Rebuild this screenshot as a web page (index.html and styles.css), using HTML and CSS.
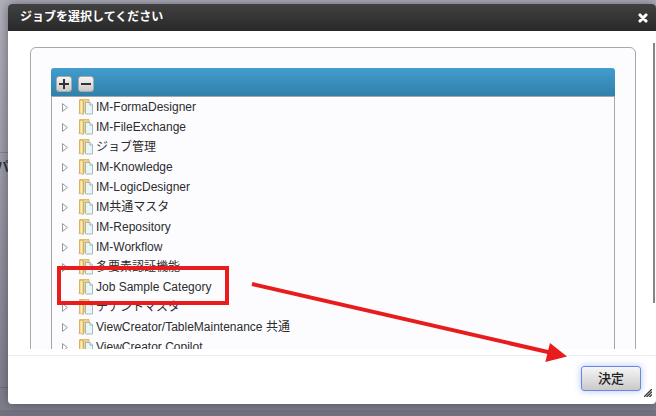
FILE: index.html
```html
<!DOCTYPE html>
<html lang="ja">
<head>
<meta charset="utf-8">
<title>ジョブを選択してください</title>
<link rel="stylesheet" href="styles.css">
</head>
<body>
<svg class="defs" width="0" height="0">
  <defs>
    <linearGradient id="gold" x1="0" x2="1" y1="0" y2="0">
      <stop offset="0" stop-color="#edc76e"/><stop offset=".5" stop-color="#fff0bd"/><stop offset="1" stop-color="#e3ba60"/>
    </linearGradient>
    <symbol id="folder" viewBox="0 0 16 16">
      <path d="M0 15L2 12.500V15z" fill="#c9c9cf"/>
      <path d="M2 .5H11V13H2z" fill="#f1d184" stroke="#d9b15c" stroke-width=".8"/>
      <path d="M1.500 .8L5.500 2V15.500L1.500 14z" fill="url(#gold)" stroke="#d0a550" stroke-width=".7"/>
      <path d="M7.500 3.500H12L14.500 6V15H7.500z" fill="#e9f5f6" stroke="#93adb1" stroke-width=".8"/>
      <path d="M12 3.500V6H14.500" fill="#fff" stroke="#7f9da3" stroke-width=".8"/>
    </symbol>
    <symbol id="caret" viewBox="0 0 6 9">
      <path d="M.5 .6L5.300 4.500L.5 8.400z" fill="#fff" stroke="#8d8d8d" stroke-width=".9"/>
    </symbol>
  </defs>
</svg>
<div class="backdrop">
  <div class="back-top"></div>
  <div class="back-mid"><span class="back-text">パ</span></div>
  <div class="back-low"></div>
  <div class="back-end"></div>
</div>
<section class="dialog">
  <header class="title-bar">
    <span>ジョブを選択してください</span>
    <svg class="close" width="10" height="10" viewBox="0 0 10 10"><path d="M2 2L8 8M8 2L2 8" stroke="#fff" stroke-width="3.100" stroke-linecap="round"/></svg>
  </header>
  <main class="content">
    <div class="panel">
      <div class="toolbar">
        <span class="tool"><svg width="10" height="10"><path d="M0 5H10M5 0V10" stroke="#333" stroke-width="2"/></svg></span>
        <span class="tool"><svg width="10" height="10"><path d="M0 5H10" stroke="#333" stroke-width="2"/></svg></span>
      </div>
      <ul class="tree">
        <li><svg class="caret"><use href="#caret"/></svg><svg class="folder"><use href="#folder"/></svg>IM-FormaDesigner</li>
        <li><svg class="caret"><use href="#caret"/></svg><svg class="folder"><use href="#folder"/></svg>IM-FileExchange</li>
        <li><svg class="caret"><use href="#caret"/></svg><svg class="folder"><use href="#folder"/></svg>ジョブ管理</li>
        <li><svg class="caret"><use href="#caret"/></svg><svg class="folder"><use href="#folder"/></svg>IM-Knowledge</li>
        <li><svg class="caret"><use href="#caret"/></svg><svg class="folder"><use href="#folder"/></svg>IM-LogicDesigner</li>
        <li><svg class="caret"><use href="#caret"/></svg><svg class="folder"><use href="#folder"/></svg>IM共通マスタ</li>
        <li><svg class="caret"><use href="#caret"/></svg><svg class="folder"><use href="#folder"/></svg>IM-Repository</li>
        <li><svg class="caret"><use href="#caret"/></svg><svg class="folder"><use href="#folder"/></svg>IM-Workflow</li>
        <li><svg class="caret"><use href="#caret"/></svg><svg class="folder"><use href="#folder"/></svg>多要素認証機能</li>
        <li><svg class="caret"></svg><svg class="folder"><use href="#folder"/></svg>Job Sample Category</li>
        <li><svg class="caret"><use href="#caret"/></svg><svg class="folder"><use href="#folder"/></svg>テナントマスタ</li>
        <li><svg class="caret"><use href="#caret"/></svg><svg class="folder"><use href="#folder"/></svg>ViewCreator/TableMaintenance 共通</li>
        <li><svg class="caret"><use href="#caret"/></svg><svg class="folder"><use href="#folder"/></svg>ViewCreator Copilot</li>
      </ul>
    </div>
    <div class="scroll-thumb"></div>
  </main>
  <footer class="footer">
    <button class="decide">決定</button>
    <svg class="grip" width="8" height="8"><path d="M0 8L8 0M2.700 8L8 2.700M5.400 8L8 5.400" stroke="#333" stroke-width="1.300"/></svg>
  </footer>
</section>
<svg class="annotation" width="656" height="416" viewBox="0 0 656 416">
  <rect x="59" y="268" width="168" height="35" fill="none" stroke="#e81c1c" stroke-width="4"/>
  <path d="M252 284L550 352.500" stroke="#e81c1c" stroke-width="4"/>
  <path d="M550 343L567 356.500L545.300 362z" fill="#e81c1c"/>
</svg>
</body>
</html>
```
FILE: styles.css
```css
* { box-sizing: border-box; }

body {
  margin: 0;
  width: 656px;
  height: 416px;
  overflow: hidden;
  position: relative;
  font-family: "Liberation Sans", "Noto Sans CJK JP", sans-serif;
  font-size: 12px;
  color: #2c2c2c;
}

.defs { position: absolute; }

.backdrop {
  position: absolute;
  inset: 0;
  display: flex;
  flex-direction: column;
  background: linear-gradient(#b2b2bc, #a0a0ab 36%, #858592 85%, #7d7d8a);
}
.back-top { height: 153px; border-bottom: 1px solid #85858f; }
.back-mid { height: 235px; border-bottom: 1px solid #70707d; overflow: hidden; }
.back-text { display: block; margin: 4px 0 0 -4px; font-size: 13px; font-weight: bold; line-height: 20px; }
.back-low { flex: 1; }
.back-end { height: 6px; background: #737380; }

.dialog {
  position: absolute;
  left: 8px;
  top: 4px;
  width: 648px;
  height: 400px;
  display: flex;
  flex-direction: column;
  overflow: hidden;
  background: #fff;
  border-radius: 4px;
  box-shadow: 0 0 12px rgba(45, 45, 65, .6);
}

.title-bar {
  height: 27px;
  flex: none;
  display: flex;
  align-items: center;
  justify-content: space-between;
  padding: 0 8px 2px 12px;
  background: linear-gradient(#414141, #292929);
  color: #fff;
  font-size: 12px;
  font-weight: bold;
  line-height: 16px;
}
.close { margin-top: 2px; }

.content {
  height: 318px;
  flex: none;
  display: flex;
  justify-content: space-between;
  overflow: hidden;
  padding: 16px 1px 0 22px;
}
.panel {
  width: 606px;
  height: 340px;
  padding: 20px;
  border: 1px solid #a8a8a8;
  border-radius: 6px;
  background: #fcfcff;
}
.toolbar {
  height: 28px;
  display: flex;
  gap: 6px;
  padding: 8px 5px 0;
  border-radius: 3px 3px 0 0;
  background: linear-gradient(#429dcd, #3080aa);
}
.tool {
  width: 16px;
  height: 16px;
  display: grid;
  place-items: center;
  border: 1px solid #aaa;
  border-radius: 3px;
  background: linear-gradient(#f6f6f6, #c9c9c9);
}
.tree {
  list-style: none;
  margin: 0;
  padding: 0;
  height: 300px;
  border: 1px solid #a5a5a5;
}
.tree li {
  height: 20px;
  display: flex;
  align-items: center;
  padding-left: 10px;
  line-height: 20px;
  white-space: nowrap;
}
.caret { width: 6px; height: 9px; margin-right: 10px; }
.folder { width: 16px; height: 16px; margin-right: 2px; }
.scroll-thumb { width: 2px; height: 260px; margin-top: -4px; background: #858585; }

.footer {
  flex: 1;
  display: flex;
  justify-content: flex-end;
  margin-top: 6px;
  padding: 10px 4px 0 0;
  border-top: 1px solid #ececec;
}
.decide {
  width: 60px;
  height: 25px;
  padding: 0 0 1px;
  border: 1px solid #6688df;
  border-radius: 3px;
  background: linear-gradient(#f6f6f6, #c9c9c9);
  box-shadow: 0 0 7px rgba(80, 125, 245, .45);
  color: #222;
  font-family: "Noto Sans CJK JP", sans-serif;
  font-size: 13px;
  font-weight: 500;
  line-height: 20px;
}
.grip { margin: 23px 0 0 3px; }

.annotation { position: absolute; left: 0; top: 0; }
```
